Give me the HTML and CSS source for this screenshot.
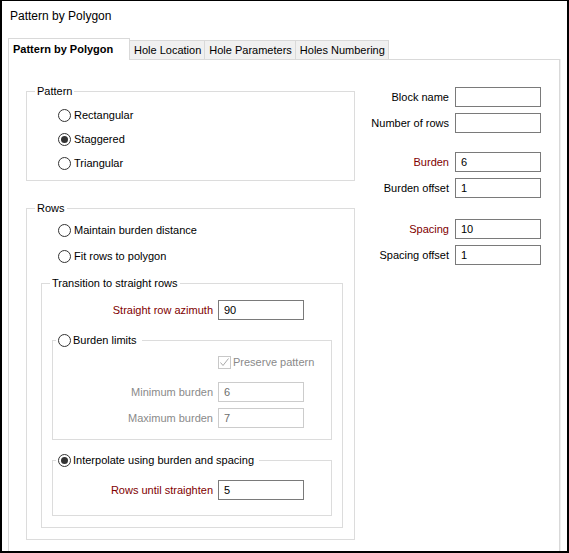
FILE: index.html
```html
<!DOCTYPE html>
<html>
<head>
<meta charset="utf-8">
<link rel="stylesheet" href="styles.css">
</head>
<body>
<div class="window">
  <div class="title">Pattern by Polygon</div>
  <div class="tabs">
    <div class="tab active">Pattern by Polygon</div>
    <div class="tab">Hole Location</div>
    <div class="tab">Hole Parameters</div>
    <div class="tab">Holes Numbering</div>
  </div>
  <div class="pane">
    <div class="left">
      <fieldset class="group pattern">
        <legend>Pattern</legend>
        <div class="opt"><span class="radio"></span>Rectangular</div>
        <div class="opt"><span class="radio on"></span>Staggered</div>
        <div class="opt"><span class="radio"></span>Triangular</div>
      </fieldset>
      <fieldset class="group rows">
        <legend>Rows</legend>
        <div class="opt"><span class="radio"></span>Maintain burden distance</div>
        <div class="opt second"><span class="radio"></span>Fit rows to polygon</div>
        <fieldset class="group transition">
          <legend>Transition to straight rows</legend>
          <div class="frow az"><span class="lbl req">Straight row azimuth</span><input class="field" value="90"></div>
          <fieldset class="group sub limits">
            <legend><span class="legend-in"><span class="radio"></span>Burden limits</span></legend>
            <div class="frow check-row"><span></span><span class="check"><span class="box"><svg width="11" height="11" viewBox="0 0 11 11"><polyline points="1.5,5.5 4,8.5 9.5,1.5" fill="none" stroke="#a9a9a9" stroke-width="1"/></svg></span><span class="dim">Preserve pattern</span></span></div>
            <div class="frow minb"><span class="lbl dim">Minimum burden</span><input class="field off" value="6"></div>
            <div class="frow maxb"><span class="lbl dim">Maximum burden</span><input class="field off" value="7"></div>
          </fieldset>
          <fieldset class="group sub interp">
            <legend><span class="legend-in"><span class="radio on"></span>Interpolate using burden and spacing</span></legend>
            <div class="frow until"><span class="lbl req">Rows until straighten</span><input class="field" value="5"></div>
          </fieldset>
        </fieldset>
      </fieldset>
    </div>
    <div class="right">
      <div class="rgroup">
        <span class="lbl">Block name</span><input class="field" value="">
        <span class="lbl">Number of rows</span><input class="field" value="">
      </div>
      <div class="rgroup g-burden">
        <span class="lbl req">Burden</span><input class="field" value="6">
        <span class="lbl">Burden offset</span><input class="field" value="1">
      </div>
      <div class="rgroup g-spacing">
        <span class="lbl req">Spacing</span><input class="field" value="10">
        <span class="lbl">Spacing offset</span><input class="field" value="1">
      </div>
    </div>
  </div>
</div>
</body>
</html>
```
FILE: styles.css
```css
* { box-sizing: border-box; }
html, body { margin: 0; padding: 0; background: #fff; }
body {
  font-family: "Liberation Sans", Arial, sans-serif;
  font-size: 11px;
  color: #000;
}
.window {
  width: 569px;
  height: 553px;
  border: 2px solid #000;
  border-top-width: 1px;
  padding: 0 7px 0 6px;
  overflow: hidden;
  display: flex;
  flex-direction: column;
  background: #fff;
}
.title {
  font-size: 12px;
  line-height: 16px;
  height: 37px;
  padding: 7px 0 0 2px;
  flex: none;
}
.tabs {
  display: flex;
  align-items: flex-end;
  height: 22px;
  flex: none;
}
.tab {
  height: 20px;
  line-height: 18px;
  padding: 0 3px 0 4px;
  border: 1px solid #d9d9d9;
  border-bottom: none;
  background: #f0f0f0;
  margin-left: -1px;
  white-space: nowrap;
}
.tab.active {
  height: 22px;
  line-height: 20px;
  width: 122px;
  margin-left: 0;
  padding: 0 0 0 4px;
  background: #fff;
  font-weight: bold;
  position: relative;
  z-index: 1;
}
.tab.active + .tab { margin-left: 0; border-left: none; }
.pane {
  flex: none;
  height: 520px;
  margin-top: -1px;
  border: 1px solid #d9d9d9;
  box-shadow: 1px 0 0 #efefef;
  padding: 24px 18px 0 17px;
  display: flex;
  justify-content: space-between;
  align-items: flex-start;
}
.left { width: 329px; flex: none; }

.group {
  margin: 0;
  min-width: 0;
  border: 1px solid #dcdcdc;
  padding: 5px 0 5px 8px;
}
legend {
  padding: 0 2px;
  line-height: 14px;
  font-size: 11px;
}
.opt {
  display: flex;
  align-items: center;
  height: 24px;
  padding-left: 23px;
}
.radio {
  width: 13px;
  height: 13px;
  border: 1px solid #333;
  border-radius: 50%;
  background: #fff;
  margin-right: 3px;
  display: inline-flex;
  align-items: center;
  justify-content: center;
  flex: none;
}
.radio.on::after {
  content: "";
  width: 7px;
  height: 7px;
  border-radius: 50%;
  background: #333;
}
.rows {
  margin-top: 20px;
  padding: 3px 0 11px 8px;
}
.rows .second { margin-top: 2px; }
.transition {
  width: 302px;
  margin: 8px 0 0 6px;
  padding: 0 0 11px 8px;
}
.frow {
  display: grid;
  grid-template-columns: 163px 86px;
  column-gap: 5px;
  align-items: center;
}
.lbl { text-align: right; white-space: nowrap; }
.req { color: #800000; }
.dim { color: #8a8a8a; }
.az { margin-top: 10px; }
.sub {
  width: 280px;
  margin: 13px 0 0 2px;
  padding: 0 0 11px 3px;
}
.sub .frow { grid-template-columns: 157px 86px; }
.legend-in {
  display: flex;
  align-items: center;
  padding-right: 3px;
}
.legend-in .radio { margin-right: 2px; }
.check-row { margin-top: 8px; height: 14px; }
.check { display: flex; align-items: center; white-space: nowrap; }
.box {
  width: 13px;
  height: 13px;
  border: 1px solid #c8c8c8;
  background: #fff;
  margin-right: 2px;
  display: flex;
  align-items: center;
  justify-content: center;
  flex: none;
}
.box svg { display: block; }
.minb { margin-top: 13px; }
.maxb { margin-top: 6px; }
.interp { padding-bottom: 15px; }
.until { margin-top: 13px; }

.field {
  width: 86px;
  height: 20px;
  margin: 0;
  border: 1px solid #7a7a7a;
  border-radius: 0;
  padding: 0 5px;
  background: #fff;
  font-family: "Liberation Sans", Arial, sans-serif;
  font-size: 11px;
  color: #000;
  outline: none;
}
.field.off { border-color: #cccccc; color: #6d6d6d; }

.right {
  width: 200px;
  margin-top: 3px;
  display: flex;
  flex-direction: column;
}
.rgroup {
  display: grid;
  grid-template-columns: 1fr 86px;
  column-gap: 6px;
  row-gap: 6px;
  align-items: center;
}
.g-burden { margin-top: 19px; }
.g-spacing { margin-top: 21px; }
```
